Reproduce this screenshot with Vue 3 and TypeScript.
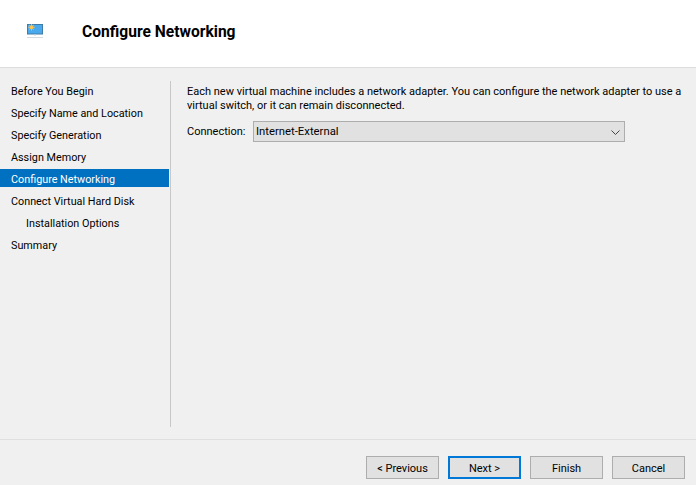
<script setup lang="ts">
const steps = [
  { label: 'Before You Begin' },
  { label: 'Specify Name and Location' },
  { label: 'Specify Generation' },
  { label: 'Assign Memory' },
  { label: 'Configure Networking', active: true },
  { label: 'Connect Virtual Hard Disk' },
  { label: 'Installation Options', sub: true },
  { label: 'Summary' },
]
const buttons = [
  { label: '< Previous' },
  { label: 'Next >', primary: true },
  { label: 'Finish' },
  { label: 'Cancel' },
]
</script>

<template>
  <div class="wizard">
    <header class="head">
      <svg class="icon" width="18" height="16" viewBox="0 0 18 16">
        <rect x="1.5" y="1.5" width="15" height="9.5" fill="#4aa8ec" stroke="#3f7da8" stroke-width="1" />
        <rect x="8" y="11.5" width="2" height="1" fill="#c9d3da" />
        <rect x="1" y="14" width="16" height="1" fill="#d4dadd" />
        <circle cx="5.5" cy="4.3" r="2" fill="#f5b324" />
        <path d="M5.5 1V7.6M2.2 4.3H8.8M3.2 2L7.8 6.6M7.8 2L3.2 6.6" stroke="#f7c964" stroke-width="0.8" />
      </svg>
      <h1 class="title">Configure Networking</h1>
    </header>
    <main class="body">
      <nav class="steps">
        <div
          v-for="s in steps"
          :key="s.label"
          class="step"
          :class="{ active: s.active, sub: s.sub }"
        >
          <span class="step-text">{{ s.label }}</span>
        </div>
      </nav>
      <section class="content">
        <p class="desc">Each new virtual machine includes a network adapter. You can configure the network adapter to use a<br />virtual switch, or it can remain disconnected.</p>
        <div class="conn">
          <label class="conn-label">Connection:</label>
          <div class="combo">
            <span class="combo-value">Internet-External</span>
            <svg class="chevron" width="9" height="5" viewBox="0 0 9 5"><path d="M0.5 0.5L4.5 4.5L8.5 0.5" fill="none" stroke="#444" stroke-width="1" /></svg>
          </div>
        </div>
      </section>
    </main>
    <footer class="foot">
      <button
        v-for="b in buttons"
        :key="b.label"
        class="btn"
        :class="{ primary: b.primary }"
      >{{ b.label }}</button>
    </footer>
  </div>
</template>

<style>
html, body { margin: 0; padding: 0; background: #f0f0f0; }
</style>

<style scoped>
.wizard {
  width: 696px;
  height: 485px;
  display: flex;
  flex-direction: column;
  background: #f0f0f0;
  font-family: Roboto, "Noto Sans", sans-serif;
  font-size: 11px;
  color: #000;
  overflow: hidden;
}
.head {
  height: 68px;
  box-sizing: border-box;
  background: #fff;
  border-bottom: 1px solid #dcdcdc;
  flex: none;
  display: flex;
  align-items: center;
  padding: 0 0 5px 26px;
}
.icon { flex: none; margin-right: 38px; }
.title {
  margin: 2px 0 0;
  font-size: 15.6px;
  font-weight: 700;
  line-height: 22px;
  color: #000;
}
.body {
  flex: 1;
  display: flex;
  padding-top: 12px;
  min-height: 0;
}
.steps {
  width: 170px;
  flex: none;
  display: flex;
  flex-direction: column;
  gap: 4px;
  padding-top: 1px;
}
.step {
  height: 18px;
  line-height: 22px;
  padding-left: 11px;
  white-space: nowrap;
  font-size: 10.8px;
}
.step.sub { padding-left: 26px; }
.step.active { background: #0070c0; color: #fff; width: 158px; }
.content {
  width: 526px;
  box-sizing: border-box;
  height: 346px;
  border-left: 1px solid #c8c8c8;
  margin-top: 1px;
  padding-left: 16px;
}
.desc {
  margin: 4px 0 0;
  line-height: 14px;
  white-space: nowrap;
}
.conn {
  display: flex;
  align-items: center;
  margin-top: 8px;
}
.conn-label { width: 66px; flex: none; }
.combo {
  width: 372px;
  height: 21px;
  box-sizing: border-box;
  border: 1px solid #adadad;
  background: #e1e1e1;
  display: flex;
  align-items: center;
  justify-content: space-between;
  padding: 0 4px 0 2px;
}
.combo-value { font-size: 11.3px; }
.chevron { margin-top: 2px; }
.foot {
  flex: none;
  height: 46px;
  box-sizing: border-box;
  border-top: 1px solid #dfdfdf;
  display: flex;
  justify-content: flex-end;
  gap: 9px;
  padding: 16px 11px 0 0;
}
.btn {
  width: 73px;
  height: 23px;
  box-sizing: border-box;
  border: 1px solid #adadad;
  background: #e1e1e1;
  font: inherit;
  color: #000;
  padding: 2px 0 0;
}
.btn.primary { border: 2px solid #0078d7; padding-top: 1px; }
</style>
